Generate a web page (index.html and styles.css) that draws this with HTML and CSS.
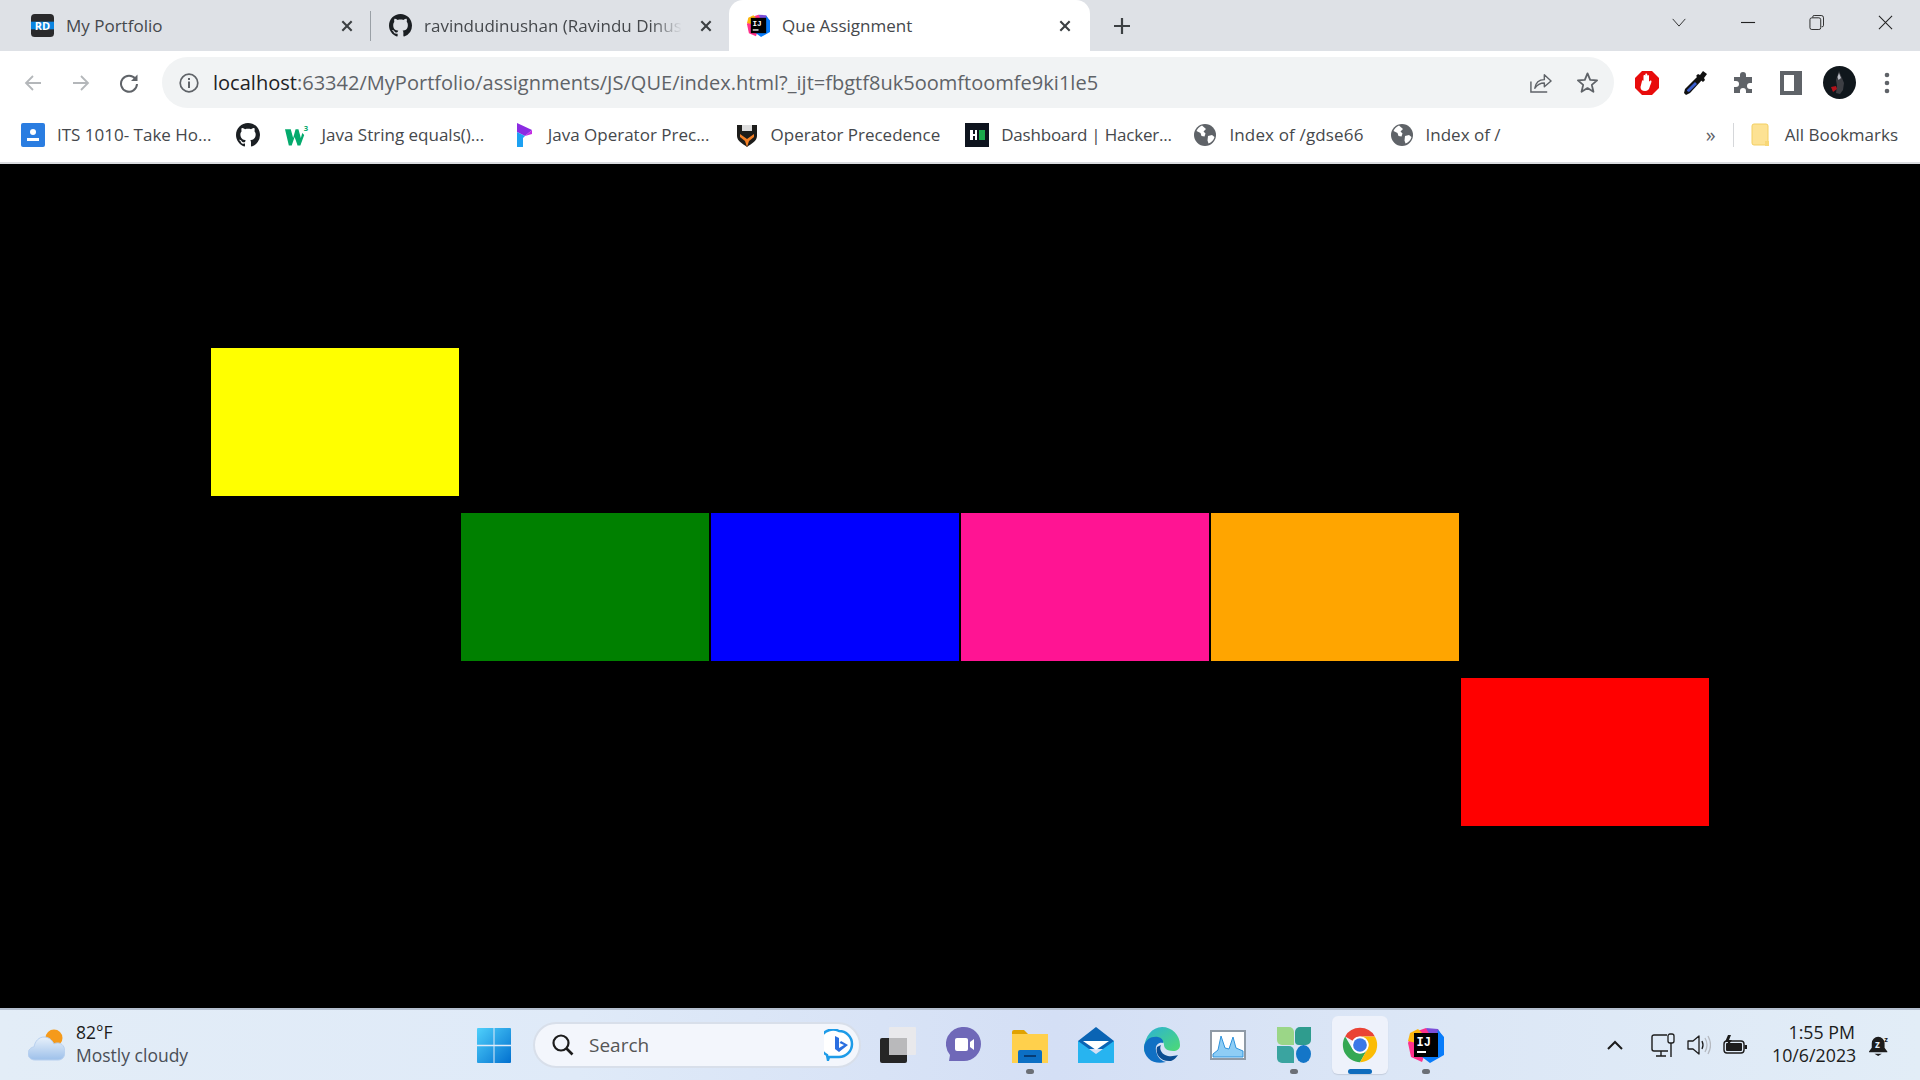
FILE: index.html
```html
<!DOCTYPE html><html><head><meta charset="utf-8">
<title>Que Assignment</title>
<link rel="stylesheet" href="styles.css">
</head>
<body>

<svg class="defs" width="0" height="0">
  <symbol id="gh" viewBox="0 0 16 16"><path fill="#1b1f23" d="M8 0C3.58 0 0 3.58 0 8c0 3.54 2.29 6.53 5.47 7.59.4.07.55-.17.55-.38 0-.19-.01-.82-.01-1.49-2.01.37-2.53-.49-2.69-.94-.09-.23-.48-.94-.82-1.13-.28-.15-.68-.52-.01-.53.63-.01 1.08.58 1.23.82.72 1.21 1.87.87 2.33.66.07-.52.28-.87.51-1.07-1.78-.2-3.64-.89-3.64-3.95 0-.87.31-1.59.82-2.15-.08-.2-.36-1.02.08-2.12 0 0 .67-.21 2.2.82.64-.18 1.32-.27 2-.27s1.36.09 2 .27c1.53-1.04 2.2-.82 2.2-.82.44 1.1.16 1.92.08 2.12.51.56.82 1.27.82 2.15 0 3.07-1.87 3.75-3.65 3.95.29.25.54.73.54 1.48 0 1.07-.01 1.93-.01 2.2 0 .21.15.46.55.38A8.013 8.013 0 0016 8c0-4.42-3.58-8-8-8z"/></symbol>
  <symbol id="ij" viewBox="0 0 36 36">
    <path fill="#ff318c" d="M4 6 18 1 24 8 14 35 3 30 0 16z"/>
    <path fill="#fdb60d" d="M2 6 10 2 16 8 8 16 0 14z"/>
    <path fill="#7b4ed8" d="M18 1 30 2 36 12 24 12z"/>
    <path fill="#087cfa" d="M30 3 36 10 36 28 22 36 14 30 26 20z"/>
    <rect x="6" y="6" width="24" height="24" fill="#000"/>
    <rect x="9" y="24" width="9" height="2" fill="#fff"/>
  </symbol>
  <symbol id="globe" viewBox="0 0 24 24">
    <circle cx="12" cy="12" r="11" fill="#5f6368"/>
    <path fill="#fff" d="M9 2.5c-2.5 1-4.5 3-5.500 5.500l4 2 1 3 3 .5 1-3-2-2 2.500-2.500zM15 13l4-1 2.500 2c-.8 3-3 5.500-6 6.500l-1-3z"/>
  </symbol>
  <symbol id="close" viewBox="0 0 12 12"><path d="M2 2 10 10M10 2 2 10" stroke="#3c4043" stroke-width="1.800" fill="none"/></symbol>
</svg>

<header class="chrome">
  <div class="tabstrip">
    <div class="tab tab-first">
      <svg class="favicon" viewBox="0 0 24 24">
        <rect width="24" height="24" rx="4" fill="#2a2a2c"/>
        <rect y="8" width="24" height="8" fill="#0a84e0"/>
        <text x="12" y="16.500" class="rd-text">RD</text>
      </svg>
      <span class="tab-title">My Portfolio</span>
      <svg class="tab-x"><use href="#close"/></svg>
    </div>
    <div class="tab tab-second">
      <svg class="favicon"><use href="#gh"/></svg>
      <span class="tab-title fade">ravindudinushan (Ravindu Dinushan)</span>
      <svg class="tab-x"><use href="#close"/></svg>
    </div>
    <div class="tab tab-active">
      <svg class="favicon" viewBox="0 0 36 36"><use href="#ij"/><text x="8.500" y="19" class="ij-text">IJ</text></svg>
      <span class="tab-title">Que Assignment</span>
      <svg class="tab-x"><use href="#close"/></svg>
    </div>
    <svg class="new-tab" viewBox="0 0 18 18"><path d="M9 1V17M1 9H17" stroke="#3c4043" stroke-width="2.200"/></svg>
    <div class="win-controls">
      <svg viewBox="0 0 16 10"><path d="M1 1 8 9 15 1" stroke="#222" fill="none"/></svg>
      <svg viewBox="0 0 16 16"><path d="M0 8H15" stroke="#222" stroke-width="1.200"/></svg>
      <svg viewBox="0 0 16 16"><path d="M4 2.500V2a1.500 1.500 0 0 1 1.500-1.500H13A2.500 2.500 0 0 1 15.500 3v8a1.500 1.500 0 0 1-1.500 1.500h-.5" stroke="#222" fill="none"/><rect x="1" y="3" width="11.500" height="12.500" rx="2" stroke="#222" fill="none"/></svg>
      <svg viewBox="0 0 16 16"><path d="M1 1 15 15M15 1 1 15" stroke="#222" stroke-width="1.100"/></svg>
    </div>
  </div>

  <div class="toolbar">
    <span class="tool"><svg viewBox="0 0 20 20"><path d="M18 10H3M10 3 3 10 10 17" stroke="#b4b7ba" stroke-width="1.800" fill="none"/></svg></span>
    <span class="tool"><svg viewBox="0 0 20 20"><path d="M2 10H17M10 3 17 10 10 17" stroke="#b4b7ba" stroke-width="1.800" fill="none"/></svg></span>
    <span class="tool"><svg viewBox="0 0 20 20"><path d="M16.500 6A8 8 0 1 0 18 11" stroke="#5f6368" stroke-width="2" fill="none"/><path d="M18.500 1.500V8H12z" fill="#5f6368"/></svg></span>
    <div class="omnibox">
      <svg class="info" viewBox="0 0 20 20"><circle cx="10" cy="10" r="8.800" stroke="#5f6368" stroke-width="1.700" fill="none"/><rect x="9" y="8.500" width="2" height="6.500" fill="#5f6368"/><rect x="9" y="5" width="2" height="2" fill="#5f6368"/></svg>
      <span class="url"><span class="host">localhost</span>:63342/MyPortfolio/assignments/JS/QUE/index.html?_ijt=fbgtf8uk5oomftoomfe9ki1le5</span>
      <span class="omni-tool"><svg viewBox="0 0 24 24"><path d="M2 11V22H19" stroke="#5f6368" stroke-width="1.500" fill="none"/><path d="M6 18C7 12 11 9 16 9V4L23 10.500 16 16.500V12.500C11 12.500 8 15 6 18z" stroke="#5f6368" stroke-width="1.500" fill="none" stroke-linejoin="round"/></svg></span>
      <span class="omni-tool"><svg viewBox="0 0 24 24"><path d="M12 2.500 14.800 9.300 22 9.800 16.500 14.500 18.200 21.700 12 17.800 5.800 21.700 7.500 14.500 2 9.800 9.200 9.300z" stroke="#5f6368" stroke-width="1.900" fill="none" stroke-linejoin="round"/></svg></span>
    </div>
    <div class="extensions">
      <span class="tool"><svg class="ext" viewBox="0 0 24 24"><path fill="#e80c0c" d="M7 0H17L24 7V17L17 24H7L0 17V7z"/><path fill="#fff" d="M7 10c0-1 1.500-1 1.500 0V5c0-1.300 1.800-1.300 1.800 0V3.500c0-1.300 1.900-1.300 1.900 0V5c0-1.200 1.800-1.200 1.800 0v6c.5-1.500 2.700-2 2.500-.5-.3 2-1.500 4-2 6-.5 2-2 3.500-4.500 3.500-3 0-4.500-1.500-4.500-4z"/></svg></span>
      <span class="tool"><svg class="ext" viewBox="0 0 24 24"><path fill="#111" d="M15 5 19 9 7 22 3 24 1 22 2 18z"/><path fill="#3a5fcf" d="M12 11 14 13 6 21 4 20 4 19z"/><path fill="#111" d="M13 5 15 3 17 4 20 0 24 3 21 7 22 9 20 11z"/></svg></span>
      <span class="tool"><svg class="ext" viewBox="0 0 24 24"><path fill="#5f6368" d="M9 4a3 3 0 0 1 6 0v2h6v6h-2a3 3 0 0 0 0 6h2v4H15v-2a3 3 0 0 0-6 0v2H3v-6h2a3 3 0 0 0 0-6H3V6h6z"/></svg></span>
      <span class="tool"><svg class="ext" viewBox="0 0 22 24"><path fill="#5f6368" fill-rule="evenodd" d="M0 0H22V24H0zM4 4V20H14V4z"/></svg></span>
      <span class="tool"><svg class="avatar" viewBox="0 0 33 33">
        <circle cx="16.500" cy="16.500" r="16.500" fill="#10171c"/>
        <path fill="#3d3f44" d="M16 5 19 12 21 17 20 24 17 28 13 27 14 20 13 14z"/>
        <path fill="#b9bcc4" d="M16 7 18 12 15.500 14 14.500 11z"/>
        <path fill="#b3121a" d="M8 21 13 20 14 23 10 26z"/>
      </svg></span>
      <span class="tool"><svg class="dots" viewBox="0 0 6 22"><circle cx="3" cy="3" r="2.300" fill="#5f6368"/><circle cx="3" cy="11" r="2.300" fill="#5f6368"/><circle cx="3" cy="19" r="2.300" fill="#5f6368"/></svg></span>
    </div>
  </div>

  <nav class="bookmarks">
    <a class="bm bm-its"><svg class="bm-icon" viewBox="0 0 24 24"><rect width="24" height="24" rx="2" fill="#2a7de1"/><circle cx="12" cy="9" r="3" fill="#fff"/><path fill="#fff" d="M6 15H18V18H6z"/></svg>ITS 1010- Take Ho...</a>
    <a class="bm bm-gh"><svg class="bm-icon"><use href="#gh"/></svg></a>
    <a class="bm bm-w3"><svg class="bm-icon" viewBox="0 0 25 24"><path fill="#04aa6d" d="M0 6H6L8.500 15 11 6H14L16.500 15 18 10 20 12 16 23H13L12.500 21 10 14 7 23H4z"/><text x="19.500" y="8" class="w3-text">3</text></svg>Java String equals()...</a>
    <a class="bm bm-prog"><svg class="bm-icon" viewBox="0 0 24 24"><path fill="#8b2be2" d="M5 0 20 7 13 13 5 9z"/><path fill="#1da1f2" d="M5 9 13 13 11 15V24H5z"/><path fill="#c42be2" d="M13 13 20 7V11z"/></svg>Java Operator Prec...</a>
    <a class="bm bm-pton"><svg class="bm-icon" viewBox="0 0 20 24"><path fill="#1d1d1b" d="M0 2H20V13C20 18 14 21 10 24 6 21 0 18 0 13z"/><rect x="5" y="2" width="10" height="6" fill="#ddd"/><path fill="#f58025" d="M3 11 10 16 17 11V14L12 18 10 24 8 18 3 14z"/></svg>Operator Precedence</a>
    <a class="bm bm-hack"><svg class="bm-icon" viewBox="0 0 24 24"><rect width="24" height="24" fill="#0e141e"/><path fill="#fff" d="M5 7H8V11H10V7H12V17H10V13H8V17H5z"/><rect x="14" y="7" width="6" height="10" fill="#1ba94c"/></svg>Dashboard | Hacker...</a>
    <a class="bm bm-idx1"><svg class="bm-icon"><use href="#globe"/></svg>Index of /gdse66</a>
    <a class="bm bm-idx2"><svg class="bm-icon"><use href="#globe"/></svg>Index of /</a>
    <span class="bm-more">»</span>
    <a class="bm bm-all"><svg class="bm-folder" viewBox="0 0 19 24"><path fill="#fde293" stroke="#f3cf62" d="M1 3A2 2 0 0 1 3 1H15A2 2 0 0 1 17 3V22H3A2 2 0 0 1 1 20z"/><path fill="#f8d775" d="M14 18H18V23H14z"/></svg>All Bookmarks</a>
  </nav>
</header>

<main class="stage">
  <div class="boxes">
    <div class="box box-yellow"></div>
    <div class="box box-green"></div>
    <div class="box box-blue"></div>
    <div class="box box-pink"></div>
    <div class="box box-orange"></div>
    <div class="box box-red"></div>
  </div>
</main>

<footer class="taskbar">
  <div class="weather">
    <svg class="weather-icon" viewBox="0 0 37 32">
      <defs><linearGradient id="cloud" x1="0" y1="0" x2="0" y2="1"><stop offset="0" stop-color="#e8f1fb"/><stop offset="1" stop-color="#9dc0ea"/></linearGradient></defs>
      <circle cx="26" cy="9" r="8.500" fill="#f59a1b"/>
      <path fill="url(#cloud)" stroke="#b8d0ef" d="M7 31C2 31 0 27 0 25C0 21 3 18 6 18C7 12 11 8 16 8C21 8 24 11 26 15C27 14 29 14 30 14C34 14 37 18 37 23C37 28 34 31 30 31z"/>
    </svg>
    <div class="weather-text"><div class="temp">82°F</div><div class="cond">Mostly cloudy</div></div>
  </div>

  <svg class="start" viewBox="0 0 34 35">
    <defs><linearGradient id="win" x1="0" y1="0" x2="1" y2="1"><stop offset="0" stop-color="#4fd0fb"/><stop offset="1" stop-color="#0270cf"/></linearGradient></defs>
    <path fill="url(#win)" d="M1 0H16.500V16.800H0V1a1 1 0 0 1 1-1zM17.500 0H33a1 1 0 0 1 1 1V16.800H17.500zM0 18.200H16.500V35H1a1 1 0 0 1-1-1zM17.500 18.200H34V34a1 1 0 0 1-1 1H17.500z"/>
  </svg>

  <div class="search">
    <svg class="search-glass" viewBox="0 0 22 22"><circle cx="9" cy="9" r="7.500" stroke="#1c1c1c" stroke-width="2.200" fill="none"/><path d="M14.500 14.500 20.500 20.500" stroke="#1c1c1c" stroke-width="2.600"/></svg>
    <span class="search-text">Search</span>
    <svg class="bing" viewBox="0 0 30 32"><path d="M15 2A13 13 0 0 1 15 28H5L4 31 3 26A13 13 0 0 1 15 2z" fill="#fff" stroke="#1d9be8" stroke-width="2.500"/><path d="M11 7 15 9V19L20 16 15.500 14 17 12 24 16 15 23 11 20z" fill="#2b6fe0"/></svg>
  </div>

  <div class="apps">
    <span class="app"><svg class="app-icon" viewBox="0 0 36 36"><rect x="0" y="11" width="27" height="25" rx="2" fill="#262626"/><rect x="9" y="0" width="27" height="28" rx="1" fill="#e9e9ec"/><rect x="9" y="11" width="18" height="17" fill="#b9b9bb"/></svg></span>
    <span class="app"><svg class="app-icon" viewBox="0 0 36 36"><path fill="#6f68b8" d="M18 0A17 17 0 0 1 18 34H3L4 28A17 17 0 0 1 18 0z"/><rect x="9" y="11" width="13" height="13" rx="2" fill="#fff"/><path fill="#fff" d="M24 15 28 12V23L24 20z"/></svg></span>
    <span class="app has-dot"><svg class="app-icon" viewBox="0 0 36 36"><path fill="#e0a200" d="M0 5A2 2 0 0 1 2 3H12L16 7H36V14H0z"/><path fill="#ffd04c" d="M0 7H36V36H0z"/><path fill="#0c6fc4" d="M6 25A2 2 0 0 1 8 23H28A2 2 0 0 1 30 25V36H6z"/><rect x="12" y="28" width="12" height="2" fill="#063c75"/></svg></span>
    <span class="app"><svg class="app-icon" viewBox="0 0 36 36"><path fill="#0a64b4" d="M0 14 18 0 36 14V22H0z"/><path fill="#fff" d="M5 14H31L18 23z"/><path fill="#27b4f0" d="M0 14 18 27 36 14V36H0z"/></svg></span>
    <span class="app"><svg class="app-icon" viewBox="0 0 36 36">
      <defs><linearGradient id="edge" x1="0" y1="0" x2="1" y2="1"><stop offset="0" stop-color="#2bb0d8"/><stop offset="1" stop-color="#4fdc70"/></linearGradient></defs>
      <path fill="url(#edge)" d="M18 0C28 0 36 8 36 18c0 4-3 6-7 6-6 0-9-3-9-6 0-2-1-4-4-4-8 0-14 6-16 12C-1 12 7 0 18 0z"/>
      <path fill="#1070c4" d="M0 20C1 12 8 9 14 10c4 1 6 4 5 6-6-1-9 4-6 11 1 4 5 7 9 8C10 38 0 32 0 20z"/>
      <path fill="#0b4c92" d="M13 20c-2 8 4 15 14 14 3-1 5-3 7-6-6 2-14 2-17-4-1-2-1-4 0-6z"/>
    </svg></span>
    <span class="app"><svg class="app-icon" viewBox="0 0 36 30"><rect x="1" y="1" width="34" height="28" fill="#fff" stroke="#8f9aa6" stroke-width="2"/><path fill="#8ecdf5" stroke="#2f93dc" d="M3 24 8 20 11 6 15 18 19 19 23 7 26 18 33 21V27H3z"/></svg></span>
    <span class="app has-dot"><svg class="app-icon" viewBox="0 0 34 36"><path fill="#9bd687" d="M0 0H12A5 5 0 0 1 17 5V18H5A5 5 0 0 1 0 13z"/><path fill="#2f9c8e" d="M34 0H23A5 5 0 0 0 18 5V14A4 4 0 0 0 22 18H29A5 5 0 0 0 34 13z"/><path fill="#3aa4a0" d="M0 19H12A5 5 0 0 1 17 24V36H5A5 5 0 0 1 0 31z"/><ellipse cx="26.500" cy="27" rx="7.500" ry="9" fill="#1476c8"/></svg></span>
    <span class="app app-on"><svg class="app-icon" viewBox="3 3 42 42">
      <path fill="#ea4335" d="M24 4A20 20 0 0 1 41.320 14H24A10 10 0 0 0 15.340 19L6.680 14A20 20 0 0 1 24 4z"/>
      <path fill="#34a853" d="M6.680 14A20 20 0 0 0 24 44L32.660 29A10 10 0 0 1 15.340 29z"/>
      <path fill="#fbbc05" d="M41.320 14H24A10 10 0 0 1 32.660 29L24 44A20 20 0 0 0 41.320 14z"/>
      <circle cx="24" cy="24" r="10" fill="#fff"/><circle cx="24" cy="24" r="8" fill="#3b78e7"/>
    </svg></span>
    <span class="app has-dot"><svg class="app-icon" viewBox="0 0 36 36"><use href="#ij"/><text x="8.500" y="19" class="ij-text">IJ</text></svg></span>
  </div>

  <div class="tray">
    <svg class="tray-chevron" viewBox="0 0 16 10"><path d="M1 9 8 2 15 9" stroke="#1c1c1c" stroke-width="2" fill="none"/></svg>
    <svg class="tray-net" viewBox="0 0 24 24"><path d="M16 2H3A2 2 0 0 0 1 4V16A2 2 0 0 0 3 18H17M10 18V23M5 23H15" stroke="#1c1c1c" stroke-width="1.400" fill="none"/><rect x="17" y="1" width="6" height="9" rx="2" stroke="#1c1c1c" stroke-width="1.300" fill="#e3edf8"/><path d="M20 10V24" stroke="#1c1c1c" stroke-width="1.400"/></svg>
    <svg class="tray-sound" viewBox="0 0 24 24"><path d="M1 8H6L12 3V21L6 16H1z" stroke="#1c1c1c" stroke-width="1.300" fill="none" stroke-linejoin="round"/><path d="M15 8Q17 12 15 16" stroke="#1c1c1c" stroke-width="1.300" fill="none"/><path d="M18 5Q22 12 18 19M21 3Q26 12 21 21" stroke="#b5b9c0" stroke-width="1.300" fill="none"/></svg>
    <svg class="tray-batt" viewBox="0 0 24 20"><path d="M5 0 2 7H5L4 12 9 5H6L8 0z" fill="#1c1c1c"/><rect x="1" y="6" width="20" height="12" rx="3" stroke="#1c1c1c" stroke-width="1.400" fill="none"/><rect x="3" y="8" width="16" height="8" rx="1" fill="#1c1c1c"/><rect x="21.500" y="10" width="2.500" height="4" fill="#1c1c1c"/></svg>
    <div class="clock"><div>1:55 PM</div><div>10/6/2023</div></div>
    <svg class="tray-bell" viewBox="0 0 24 24"><path fill="#1c1c1c" d="M10 3A7 7 0 0 0 3 10V15L0 19V20H20V19L17 15V10A7 7 0 0 0 10 3z"/><path fill="#1c1c1c" d="M6 21.500H14L10 24z"/><text x="6.500" y="15" class="zz">z</text><text x="16.500" y="9" class="zz-top">z</text></svg>
  </div>
</footer>

</body>
</html>
```

FILE: styles.css
```css
*{box-sizing:border-box;}
html,body{margin:0;padding:0;}
body{
  width:1920px;
  height:1080px;
  overflow:hidden;
  display:flex;
  flex-direction:column;
  font-family:"Open Sans","Noto Sans",sans-serif;
  font-size:15px;
  color:#3c4043;
  background:#000;
}
svg{display:block;flex:none;}
.defs{position:absolute;}
.ij-text{font:bold 12px "Liberation Mono",monospace;fill:#fff;}
.rd-text{font:bold 11.500px "Open Sans",sans-serif;fill:#fff;text-anchor:middle;}
.w3-text{font:bold 8px "Open Sans",sans-serif;fill:#04aa6d;}

/* browser frame */
.chrome{background:#fff;}
.tabstrip{
  height:51px;
  background:#dee1e6;
  display:flex;
  align-items:center;
}
.tab{
  height:51px;
  display:flex;
  align-items:center;
  flex:none;
}
.tab-first{width:371px;padding-left:31px;position:relative;}
.tab-first::after{
  content:"";
  position:absolute;
  right:0;
  top:11px;
  height:30px;
  width:1px;
  background:#9aa0a6;
}
.tab-second{width:358px;padding-left:18px;}
.tab-active{
  width:361px;
  padding-left:18px;
  background:#fff;
  border-radius:14px 14px 0 0;
}
.favicon{width:23px;height:23px;}
.tab-title{
  flex:1;
  margin-left:12px;
  font-size:17px;
  white-space:nowrap;
  overflow:hidden;
  color:#45484c;
}
.fade{
  -webkit-mask-image:linear-gradient(to right,#000 88%,transparent 100%);
  mask-image:linear-gradient(to right,#000 88%,transparent 100%);
}
.tab-x{width:14px;height:14px;margin:0 17px;}
.tab-second .tab-x{margin-right:16px;}
.tab-active .tab-x{margin-right:18px;}
.new-tab{width:18px;height:18px;margin-left:23px;}
.win-controls{
  margin-left:auto;
  width:249px;
  display:flex;
  align-items:center;
  justify-content:space-between;
  padding:0 27px 6px 0;
}
.win-controls svg{width:15px;height:15px;}
.win-controls svg:first-child{height:9px;width:16px;}

.toolbar{
  height:57px;
  padding:6px 9px 0;
  display:flex;
  align-items:center;
}
.tool{
  width:48px;
  height:51px;
  display:flex;
  align-items:center;
  justify-content:center;
  flex:none;
}
.tool svg{width:20px;height:20px;}
.omnibox{
  width:1452px;
  height:51px;
  margin-left:9px;
  padding:0 3px 0 17px;
  background:#f1f3f4;
  border-radius:26px;
  display:flex;
  align-items:center;
}
.info{width:20px;height:20px;}
.url{
  flex:1;
  margin-left:14px;
  font-size:20.050px;
  color:#5f6368;
  white-space:nowrap;
}
.host{color:#202124;}
.omni-tool{
  width:47px;
  display:flex;
  justify-content:center;
}
.omni-tool svg{width:23px;height:23px;}
.extensions{display:flex;margin-left:9px;}
.tool svg.ext{width:24px;height:24px;}
.tool svg.avatar{width:33px;height:33px;}
.tool svg.dots{width:6px;height:22px;}

.bookmarks{
  height:56px;
  padding:0 0 1px 21px;
  border-bottom:2px solid #dadce0;
  display:flex;
  align-items:center;
  font-size:17px;
}
.bm{
  display:flex;
  align-items:center;
  white-space:nowrap;
  color:#45484c;
  margin-right:25px;
}
.bm-w3{margin-right:27.500px;}
.bm-hack{letter-spacing:-.2px;margin-right:21.500px;}
.bm-idx1{letter-spacing:.15px;margin-right:26px;}
.bm-icon{width:24px;height:24px;margin-right:12px;}
.bm-gh .bm-icon{margin-right:0;}
.bm-more{margin-left:auto;font-size:20px;line-height:20px;margin-right:17px;color:#5f6368;}
.bm-all{margin:0;padding:0 22px 0 17px;border-left:1px solid #d5d7da;}
.bm-folder{width:19px;height:24px;margin-right:15px;}

/* page content */
.stage{
  flex:1;
  background:#000;
  padding:184px 0 0 211px;
}
.boxes{
  display:grid;
  grid-template-columns:repeat(6,248px);
  grid-template-rows:repeat(3,148px);
  gap:17px 2px;
}
.box-yellow{background:#ff0;grid-column:1;grid-row:1;}
.box-green{background:#008000;grid-column:2;grid-row:2;}
.box-blue{background:#00f;grid-column:3;grid-row:2;}
.box-pink{background:#ff1493;grid-column:4;grid-row:2;}
.box-orange{background:#ffa500;grid-column:5;grid-row:2;}
.box-red{background:#f00;grid-column:6;grid-row:3;}

/* windows taskbar */
.taskbar{
  height:72px;
  flex:none;
  border-top:2px solid #b4bfcf;
  background:linear-gradient(to right,#e3edf7 0%,#dfeaf8 30%,#d4dff5 55%,#dbe6f6 72%,#e2edf7 100%);
  display:flex;
  align-items:center;
  color:#1c1c1c;
}
.weather{
  width:477px;
  padding-left:28px;
  display:flex;
  align-items:center;
}
.weather-icon{width:37px;height:32px;}
.weather-text{margin-left:11px;font-size:17.500px;line-height:23px;margin-top:-3px;}
.cond{color:#4a4f57;}
.start{width:34px;height:35px;}
.search{
  width:328px;
  height:46px;
  margin-left:22px;
  margin-right:4px;
  padding:0 5px 0 17px;
  background:#f3f6fc;
  border:2px solid #d8dfea;
  border-radius:23px;
  display:flex;
  align-items:center;
}
.search-glass{width:22px;height:22px;}
.search-text{flex:1;margin-left:15px;font-size:19px;color:#555;}
.bing{width:30px;height:32px;}
.apps{display:flex;}
.app{
  width:66px;
  height:58px;
  display:flex;
  align-items:center;
  justify-content:center;
  position:relative;
}
.app-icon{width:36px;height:36px;}
.has-dot::after{
  content:"";
  position:absolute;
  left:29px;
  bottom:0;
  width:8px;
  height:5px;
  border-radius:3px;
  background:#6b6f76;
}
.app-on::before{
  content:"";
  position:absolute;
  left:5px;
  top:0;
  width:56px;
  height:58px;
  border-radius:6px;
  background:#eef2fb;
  box-shadow:0 1px 1px #c4cddd;
}
.app-on .app-icon{position:relative;}
.app-on::after{
  content:"";
  position:absolute;
  left:21px;
  bottom:0;
  width:24px;
  height:5px;
  border-radius:3px;
  background:#0f6cbd;
}
.tray{
  margin-left:auto;
  padding-right:29px;
  display:flex;
  align-items:center;
}
.tray-chevron{width:16px;height:10px;margin-right:28px;}
.tray-net{width:24px;height:24px;margin-right:12px;}
.tray-sound{width:24px;height:24px;margin-right:12px;}
.tray-batt{width:24px;height:20px;margin-right:25px;}
.clock{
  width:83px;
  text-align:right;
  font-size:17.800px;
  line-height:23px;
  margin-top:-3px;
  white-space:nowrap;
  margin-right:14px;
}
.tray-bell{width:22px;height:24px;}
.zz{font:bold 11px "Open Sans",sans-serif;fill:#e3edf8;}
.zz-top{font:bold 8px "Open Sans",sans-serif;fill:#1c1c1c;}
```
